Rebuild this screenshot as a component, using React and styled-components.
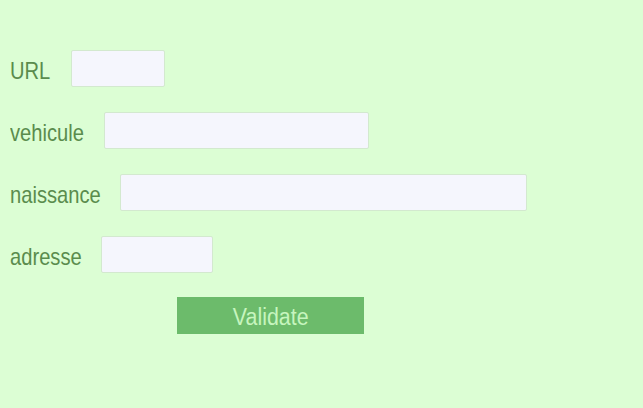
import React from "react";
import styled, { createGlobalStyle } from "styled-components";

const Global = createGlobalStyle`
  html, body { margin: 0; padding: 0; background: #dcfed4; }
  body { font-family: "Liberation Sans", Arial, sans-serif; }
`;

const Page = styled.div`
  width: 643px;
  height: 408px;
  background: #dcfed4;
  box-sizing: border-box;
  padding: 50px 0 0 10px;
`;

const Form = styled.form`
  display: flex;
  flex-direction: column;
  gap: 25px;
`;

const Row = styled.div`
  display: flex;
  align-items: center;
  height: 37px;
`;

const ActionRow = styled(Row)`
  margin-top: -1px;
`;

const Label = styled.label`
  flex: none;
  width: ${(p) => p.$w}px;
  font-size: 24px;
  line-height: 1;
  color: #5a8c4d;
  padding-top: 4px;
  white-space: nowrap;
`;

const Narrow = styled.span`
  display: inline-block;
  transform: scaleX(${(p) => p.$sx});
  transform-origin: ${(p) => p.$origin || "left"} center;
`;

const Input = styled.input`
  box-sizing: border-box;
  width: ${(p) => p.$w}px;
  height: 37px;
  background: #f5f6fd;
  border: 1px solid #d3e9cf;
  border-radius: 2px;
  outline: none;
  padding: 0 6px;
  font-family: "Liberation Sans", Arial, sans-serif;
`;

const Button = styled.button`
  box-sizing: border-box;
  margin-left: 167px;
  width: 187px;
  height: 37px;
  background: #6cbb6b;
  border: none;
  border-radius: 0;
  color: #c6f5be;
  font-family: "Liberation Sans", Arial, sans-serif;
  font-size: 23px;
  line-height: 1;
  padding: 4px 0 0;
  cursor: pointer;
`;

const fields = [
  { name: "URL", label: 61, w: 94 },
  { name: "vehicule", label: 94, w: 265 },
  { name: "naissance", label: 110, w: 407 },
  { name: "adresse", label: 91, w: 112 },
];

export default function App() {
  return (
    <Page>
      <Global />
      <Form onSubmit={(e) => e.preventDefault()}>
        {fields.map((f) => (
          <Row key={f.name}>
            <Label $w={f.label}>
              <Narrow $sx={0.84}>{f.name}</Narrow>
            </Label>
            <Input $w={f.w} />
          </Row>
        ))}
        <ActionRow>
          <Button type="submit">
            <Narrow $sx={0.93} $origin="center">Validate</Narrow>
          </Button>
        </ActionRow>
      </Form>
    </Page>
  );
}
